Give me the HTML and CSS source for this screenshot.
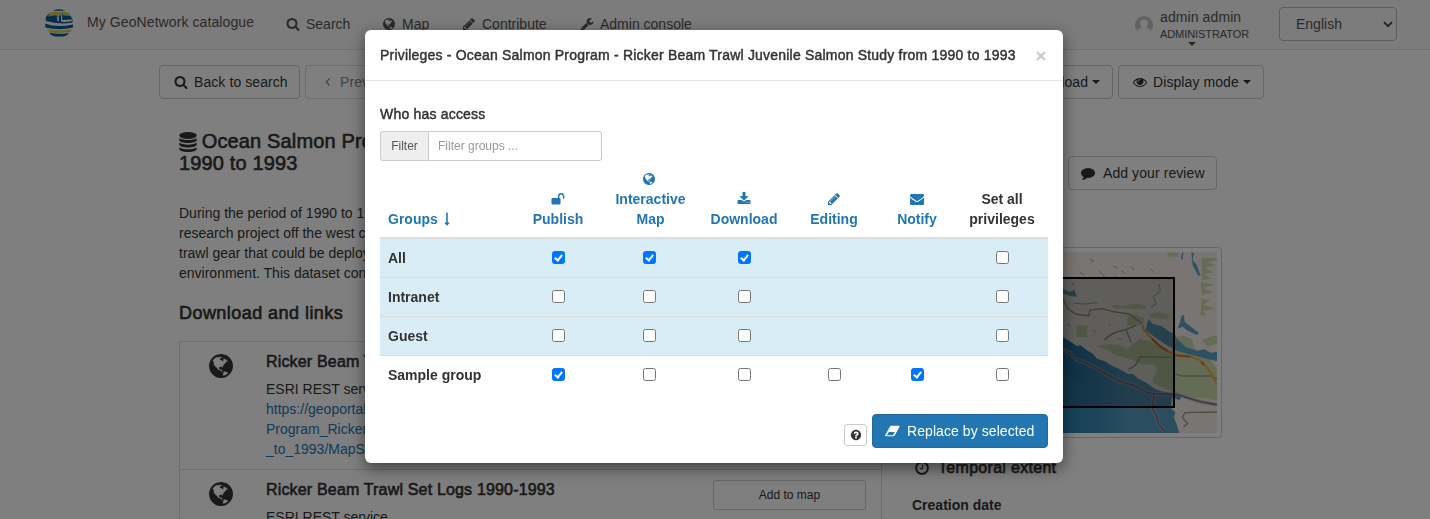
FILE: index.html
```html
<!DOCTYPE html>
<html lang="en">
<head>
<meta charset="utf-8">
<title>My GeoNetwork catalogue</title>
<link rel="stylesheet" href="styles.css">
</head>
<body>
<svg class="sprite" aria-hidden="true">
  <symbol id="search" viewBox="0 0 1792 1792"><path d="M1216 832q0-185-131.500-316.500t-316.500-131.500-316.500 131.500-131.500 316.500 131.500 316.500 316.500 131.500 316.500-131.500 131.500-316.500zm512 832q0 52-38 90t-90 38q-54 0-90-38l-343-342q-179 124-399 124-143 0-273.500-55.500t-225-150-150-225-55.500-273.500 55.500-273.500 150-225 225-150 273.500-55.500 273.500 55.500 225 150 150 225 55.500 273.500q0 220-124 399l343 343q37 37 37 90z"/></symbol>
  <symbol id="globe" viewBox="0 0 1792 1792"><path d="M896 128q209 0 385.500 103t279.500 279.500 103 385.500-103 385.500-279.500 279.500-385.500 103-385.500-103-279.500-279.500-103-385.500 103-385.500 279.500-279.500 385.500-103zm274 521q-2 1-9.500 9.500t-13.500 9.500q2 0 4.500-5t5-11 3.500-7q6-7 22-15 14-6 52-12 34-8 51 11-2-2 9.500-13t14.500-12q3-2 15-4.500t15-7.500l2-22q-12 1-17.500-7t-6.500-21q0 2-6 8 0-7-4.500-8t-11.500 1-9 1q-10-3-15-7.500t-8-16.500-4-15q-2-5-9.500-11t-9.500-10q-1-2-2.500-5.500t-3-6.500-4-5.500-5.500-2.500-7 5-7.500 10-4.500 5q-3-2-6-1.500t-4.500 1-4.500 3-5 3.500q-3 2-8.500 3t-8.500 2q15-5-1-11-10-4-16-3 9-4 7.500-12t-8.500-14h5q-1-4-8.500-8.500t-17.500-8.500-13-6q-8-5-34-9.500t-33-.5q-5 6-4.500 10.500t4 14 3.500 12.500q1 6-5.500 13t-6.500 12q0 7 14 15.500t10 21.500q-3 8-16 16t-16 12q-5 8-1.500 18.500t10.500 16.500q2 2 1.500 4t-3.500 4.500-5.500 4-6.500 3.500l-3 2q-11 5-20.500-6t-13.500-26q-7-25-16-30-23-8-29 1-5-13-41-26-25-9-58-4 6-1 0-15-7-15-19-12 3-6 4-17.500t1-13.500q3-13 12-23 1-1 7-8.500t9.500-13.500.5-6q35 4 50-11 5-5 11.500-17t10.500-17q9-6 14-5.500t14.500 5.500 14.500 5q14 1 15.500-11t-7.500-20q12 1 3-17-4-7-8-9-12-4-27 5-8 4 2 8-1-1-9.500 10.500t-16.500 17.500-16-5q-1-1-5.500-13.500t-9.500-13.500q-8 0-16 15 3-8-11-15t-24-8q19-12-8-27-7-4-20.500-5t-19.500 4q-5 7-5.500 11.500t5 8 10.500 5.500 11.500 4 8.500 3q14 10 8 14-2 1-8.500 3.500t-11.500 4.500-6 4q-3 4 0 14t-2 14q-5-5-9-17.500t-7-16.500q7 9-25 6l-10-1q-4 0-16 2t-20.500 1-13.500-8q-4-8 0-20 1-4 4-2-4-3-11-9.500t-10-8.500q-46 15-94 41 6 1 12-1 5-2 13-6.500t10-5.500q34-14 42-7l5-5q14 16 20 25-7-4-30-1-20 6-22 12 7 12 5 18-4-3-11.500-10t-14.500-11-15-5q-16 0-22 1-146 80-235 222 7 7 12 8 4 1 5 9t2.500 11 11.500-3q9 8 3 19 1-1 44 27 19 17 21 21 3 11-10 18-1-2-9-9t-9-4q-3 5 .5 18.500t10.500 12.500q-7 0-9.500 16t-2.500 35.500-1 23.500l2 1q-3 12 5.500 34.500t21.500 19.500q-13 3 20 43 6 8 8 9 3 2 12 7.500t15 10 10 10.500q4 5 10 22.500t14 23.500q-2 6 9.500 20t10.500 23q-1 0-2.500 1t-2.500 1q3 7 15.500 14t15.500 13q1 3 2 10t3 11 8 2q2-20-24-62-15-25-17-29-3-5-5.500-15.500t-4.500-14.500q2 0 6 1.500t8.500 3.500 7.500 4 2 3q-3 7 2 17.500t12 18.500 17 19 12 13q6 6 14 19.500t0 13.500q9 0 20 10.500t17 19.500q5 8 8 26t5 24q2 7 8.500 13.500t12.500 9.500l16 8 13 7q5 2 18.500 10.500t21.500 11.500q10 4 16 4t14.500-2.500 13.500-3.500q15-2 29 15t21 21q36 19 55 11-2 1 .5 7.500t8 15.500 9 14.500 5.500 8.500q5 6 18 15t18 15q6-4 7-9-3 8 7 20t18 10q14-3 14-32-31 15-49-18 0-1-2.500-5.500t-4-8.500-2.500-8.500 0-7.500 5-3q9 0 10-3.500t-2-12.500-4-13q-1-8-11-20t-12-15q-5 9-16 8t-16-9q0 1-1.500 5.500t-1.500 6.500q-13 0-15-1 1-3 2.500-17.500t3.500-22.500q1-4 5.500-12t7.500-14.500 4-12.500-4.500-9.500-17.500-2.500q-19 1-26 20-1 3-3 10.500t-5 11.500-9 7q-7 3-24 2t-24-5q-13-8-22.500-29t-9.500-37q0-10 2.500-26.500t3-25-5.500-24.500q3-2 9-9.500t10-10.500q2-1 4.500-1.500t4.500 0 4-1.500 3-6q-1-1-4-3-3-3-4-3 7 3 28.500-1.500t27.500 1.500q15 11 22-2 0-1-2.500-9.500t-.5-13.500q5 27 29 9 3 3 15.500 5t17.500 5q3 2 7 5.500t5.500 4.500 5-.5 8.500-6.500q10 14 12 24 11 40 19 44 7 3 11 2t4.500-9.500 0-14-1.500-12.500l-1-8v-18l-1-8q-15-3-18.500-12t1.500-18.500 15-18.500q1-1 8-3.500t15.500-6.500 12.500-8q21-19 15-35 7 0 11-9-1 0-5-3t-7.500-5-4.500-2q9-5 2-16 5-3 7.500-11t7.500-10q9 12 21 2 7-8 1-16 5-7 20.500-10.500t18.500-9.500q7 2 8-2t1-12 3-12q4-5 15-9t13-5l17-11q3-4 0-4 18 2 31-11 10-11-6-20 3-6-3-9.500t-15-5.500q3-1 11.500-.5t10.500-1.500q15-10-7-16-17-5-43 12zm-163 877q206-36 351-189-3-3-12.500-4.500t-12.500-3.500q-18-7-24-8 1-7-2.500-13t-8-9-12.500-8-11-7q-2-2-7-6t-7-5.500-7.500-4.500-8.500-2-10 1l-3 1q-3 1-5.500 2.500t-5.500 3-4 3 0 2.500q-21-17-36-22-5-1-11-5.500t-10.500-7-10-1.500-11.500 7q-5 5-6 15t-2 13q-7-5 0-17.500t2-18.500q-3-6-10.500-4.500t-12 4.500-11.500 8.500-9 6.500-8.500 5.500-8.500 7.500q-3 4-6 12t-5 11q-2-4-11.500-6.500t-9.500-5.500q2 10 4 35t5 38q7 31-12 48-27 25-29 40-4 22 12 26 0 7-8 20.500t-7 21.500q0 6 2 16z"/></symbol>
  <symbol id="pencil" viewBox="0 0 1792 1792"><path d="M491 1536l91-91-235-235-91 91v107h128v128h107zm523-928q0-22-22-22-10 0-17 7l-542 542q-7 7-7 17 0 22 22 22 10 0 17-7l542-542q7-7 7-17zm-54-192l416 416-832 832h-416v-416zm683 96q0 53-37 90l-166 166-416-416 166-165q36-38 90-38 53 0 91 38l235 234q37 39 37 91z"/></symbol>
  <symbol id="wrench" viewBox="0 0 1792 1792"><path d="M448 1472q0-26-19-45t-45-19-45 19-19 45 19 45 45 19 45-19 19-45zm644-420l-682 682q-37 37-90 37-52 0-91-37l-106-108q-38-36-38-90 0-53 38-91l681-681q39 98 114.500 173.500t173.500 114.500zm634-435q0 39-23 106-47 134-164.500 217.500t-258.500 83.500q-185 0-316.500-131.500t-131.500-316.500 131.500-316.500 316.500-131.500q58 0 121.500 16.500t107.500 46.500q16 11 16 28t-16 28l-293 169v224l193 107q5-3 79-48.500t135.500-81 70.500-35.500q15 0 23.500 10t8.500 25z"/></symbol>
  <symbol id="eye" viewBox="0 0 1792 1792"><path d="M1664 960q-152-236-381-353 61 104 61 225 0 185-131.500 316.500t-316.500 131.500-316.500-131.500-131.500-316.500q0-121 61-225-229 117-381 353 133 205 333.500 326.500t434.500 121.500 434.500-121.500 333.500-326.500zm-720-384q0-20-14-34t-34-14q-125 0-214.500 89.500t-89.500 214.500q0 20 14 34t34 14 34-14 14-34q0-86 61-147t147-61q20 0 34-14t14-34zm848 384q0 34-20 69-140 230-376.500 368.500t-499.500 138.500-499.500-139-376.500-368q-20-35-20-69t20-69q140-229 376.500-368t499.500-139 499.500 139 376.500 368q20 35 20 69z"/></symbol>
  <symbol id="comment" viewBox="0 0 1792 1792"><path d="M1792 896q0 174-120 321.500t-326 233-450 85.500q-70 0-145-8-198 175-460 242-49 14-114 22-17 2-30.500-9t-17.500-29v-1q-3-4-.5-12t2-10 4.500-9.500l6-9 7-8.500 8-9q7-8 31-34.500t34.500-38 31-39.500 32.500-51 27-59 26-76q-157-89-247.500-220t-90.500-281q0-130 71-248.500t191-204.500 286-136.500 348-50.500q244 0 450 85.500t326 233 120 321.500z"/></symbol>
  <symbol id="envelope" viewBox="0 0 1792 1792"><path d="M1792 710v794q0 66-47 113t-113 47h-1472q-66 0-113-47t-47-113v-794q44 49 101 87 362 246 497 345 57 42 92.500 65.500t94.500 48 110 24.500h2q51 0 110-24.500t94.500-48 92.500-65.500q170-123 498-345 57-39 100-87zm0-294q0 79-49 151t-122 123q-376 261-468 325-10 7-42.500 31t-54 38.500-52 32.500-57.500 27-50 9h-2q-23 0-50-9t-57.500-27-52-32.500-54-38.500-42.500-31q-91-64-262-182.500t-205-142.500q-62-42-117-115.500t-55-136.500q0-78 41.500-130t118.500-52h1472q65 0 112.500 47t47.500 113z"/></symbol>
  <symbol id="download" viewBox="0 0 1792 1792"><path d="M1344 1344q0-26-19-45t-45-19-45 19-19 45 19 45 45 19 45-19 19-45zm256 0q0-26-19-45t-45-19-45 19-19 45 19 45 45 19 45-19 19-45zm128-224v320q0 40-28 68t-68 28h-1472q-40 0-68-28t-28-68v-320q0-40 28-68t68-28h465l135 136q58 56 136 56t136-56l136-136h464q40 0 68 28t28 68zm-325-569q17 41-14 70l-448 448q-18 19-45 19t-45-19l-448-448q-31-29-14-70 17-39 59-39h256v-448q0-26 19-45t45-19h256q26 0 45 19t19 45v448h256q42 0 59 39z"/></symbol>
  <symbol id="clock" viewBox="0 0 1792 1792"><path d="M1024 544v448q0 14-9 23t-23 9h-320q-14 0-23-9t-9-23v-64q0-14 9-23t23-9h224v-352q0-14 9-23t23-9h64q14 0 23 9t9 23zm416 352q0-148-73-273t-198-198-273-73-273 73-198 198-73 273 73 273 198 198 273 73 273-73 198-198 73-273zm224 0q0 209-103 385.500t-279.500 279.500-385.500 103-385.500-103-279.500-279.500-103-385.500 103-385.500 279.500-279.500 385.500-103 385.500 103 279.500 279.500 103 385.500z"/></symbol>
  <symbol id="question" viewBox="0 0 1792 1792"><path d="M1024 1376v-192q0-14-9-23t-23-9h-192q-14 0-23 9t-9 23v192q0 14 9 23t23 9h192q14 0 23-9t9-23zm256-672q0-88-55.500-163t-138.500-116-170-41q-243 0-371 213-15 24 8 42l132 100q7 6 19 6 16 0 25-12 53-68 86-92 34-24 86-24 48 0 85.500 26t37.500 59q0 38-20 61t-68 45q-63 28-115.500 86.500t-52.500 125.500v36q0 14 9 23t23 9h192q14 0 23-9t9-23q0-19 21.500-49.500t54.500-49.500q32-18 49-28.500t46-35 44.500-48 28-60.500 12.500-81zm384 192q0 209-103 385.500t-279.500 279.500-385.500 103-385.500-103-279.500-279.500-103-385.500 103-385.500 279.500-279.500 385.500-103 385.500 103 279.500 279.500 103 385.500z"/></symbol>
  <symbol id="database" viewBox="0 0 18 20"><ellipse cx="9" cy="3.500" rx="8.700" ry="3.400"/><path d="M.3 6c3 2.800 14.400 2.800 17.400 0v2c0 4-17.400 4-17.400 0zM.3 10.600c3 2.800 14.400 2.800 17.400 0v2c0 4-17.400 4-17.400 0zM.3 15.200c3 2.800 14.400 2.800 17.400 0v1.900c0 4-17.400 4-17.400 0z"/></symbol>
  <symbol id="unlock" viewBox="0 0 14 14"><rect x=".5" y="6" width="9" height="6.500" rx=".7"/><path d="M7.700 6.300V4.200a2.400 2.400 0 0 1 4.900 0v2" fill="none" stroke="currentColor" stroke-width="1.400" stroke-linecap="round"/></symbol>
  <symbol id="arrow-down" viewBox="0 0 6 14"><path d="M2.200.5h1.600v10H6L3 13.800 0 10.500h2.200z"/></symbol>
  <symbol id="eraser" viewBox="0 0 15 12"><path fill-rule="evenodd" d="M6.200.7h7.600q1.200 0 .7 1L9.700 10.500q-.5.800-1.300.8H.9q-1.200 0-.7-1L5 1.500Q5.400.7 6.200.7zM3.800 7L2 10.200h6L9.800 7z"/></symbol>
  <symbol id="times" viewBox="0 0 10 10"><path d="M1 1l8 8M9 1L1 9" stroke="currentColor" stroke-width="2.400"/></symbol>
  <symbol id="chevron-left" viewBox="0 0 6 10"><path d="M4.600 1.500L1.200 5l3.400 3.500" fill="none" stroke="currentColor" stroke-width="1.200"/></symbol>
</svg>

<header class="navbar">
  <svg class="logo" viewBox="0 0 28 28">
    <path fill="#0d5a96" d="M9 1.500Q14-1 19 1.500L20 2Q14 1.500 8.500 2zM5 4Q14 2.500 23 4l3 3.500Q28 10 27.500 13.500 14 16 1 12 0 8.500 2 6.500z"/>
    <path fill="#d9cf3a" d="M5 3.800Q14 2 23 3.800l3 3.400-8-1V5h-2v1.500H9L3 7.500z"/>
    <path fill="#f4f4f4" d="M12.500 5.500h1.300v7q-1.200 0-1.800-1.500zM16 5.500h1.200V11l10-.5v1.500q-8 1.500-11.200.5z"/>
    <path fill="#0d5a96" d="M0 14.500Q12 19 28 15.500v3Q14 22 .5 18.500z"/>
    <path fill="#d9cf3a" d="M2 20.300q12 2.500 25 .2l-1.500 2.600Q14 24.500 5 23.200z"/>
    <path fill="#0d5a96" d="M4.500 23.800Q14 25.800 24 24q-1.500 3-5 3.400H10Q6 27 4.500 23.800z"/>
  </svg>
  <span class="brand">My GeoNetwork catalogue</span>
  <nav class="menu">
    <a class="m-search"><svg class="fa"><use href="#search"/></svg><span>Search</span></a>
    <a class="m-map"><svg class="fa"><use href="#globe"/></svg><span>Map</span></a>
    <a class="m-contribute"><svg class="fa"><use href="#pencil"/></svg><span>Contribute</span></a>
    <a class="m-admin"><svg class="fa"><use href="#wrench"/></svg><span>Admin console</span></a>
  </nav>
  <div class="user">
    <svg class="avatar" viewBox="0 0 18 18"><circle cx="9" cy="9" r="9" fill="#c5c5c5"/><path fill="#f8f8f8" d="M9 3.500c5 0 4.500 7 2 8.300 3 .5 4 1.500 4.500 3.700A9 9 0 0 1 2.500 15.500c.5-2.200 1.500-3.200 4.500-3.700C4.500 10.500 4 3.500 9 3.500z"/></svg>
    <div class="who"><span class="name">admin admin</span><span class="role">ADMINISTRATOR</span><i class="caret"></i></div>
  </div>
  <div class="lang"><span>English</span><svg class="chev" viewBox="0 0 10 7"><path d="M1 1.200l4 4 4-4" fill="none" stroke="#444" stroke-width="1.900"/></svg></div>
</header>

<div class="toolbar">
  <div class="btn b-back"><svg class="fa"><use href="#search"/></svg><span>Back to search</span></div>
  <div class="btn b-prev"><svg class="left"><use href="#chevron-left"/></svg><span>Previous</span></div>
  <div class="btn b-down"><svg class="fa"><use href="#download"/></svg><span>Download</span><i class="caret"></i></div>
  <div class="btn b-mode"><svg class="fa"><use href="#eye"/></svg><span>Display mode</span><i class="caret"></i></div>
</div>

<main class="record">
  <section class="main">
    <h1><svg class="db"><use href="#database"/></svg> <span>Ocean Salmon Program - Ricker Beam Trawl</span><br>1990 to 1993</h1>
    <p class="abstract">During the period of 1990 to 1993<br>research project off the west coast<br>trawl gear that could be deployed<br>environment. This dataset contains</p>
    <h2>Download and links</h2>
    <div class="links">
      <div class="link">
        <svg class="big"><use href="#globe"/></svg>
        <div class="info"><h3>Ricker Beam Trawl</h3><p>ESRI REST service</p><a>https://geoportal<br>Program_Ricker<br>_to_1993/MapServer</a></div>
      </div>
      <div class="link">
        <svg class="big"><use href="#globe"/></svg>
        <div class="info"><h3>Ricker Beam Trawl Set Logs 1990-1993</h3><p>ESRI REST service</p></div>
        <div class="add">Add to map</div>
      </div>
    </div>
  </section>
  <aside class="side">
    <div class="btn review"><svg class="fa"><use href="#comment"/></svg><span>Add your review</span></div>
    <div class="map">
      <svg viewBox="-402 36 903 543" preserveAspectRatio="none">
        <defs><linearGradient id="sea" x1="0" x2="1"><stop offset=".5" stop-color="#1572ab"/><stop offset=".8" stop-color="#559cc0"/></linearGradient></defs>
        <rect x="-402" y="36" width="903" height="543" fill="#f2ebe4"/>
        <path fill="url(#sea)" d="M-402 250L39 292l20 12 22 14 10-2 24 18 12 6 14 16 24 8 18 12 26 12 26 14 14 0 16 14 24 12 22 16 18 8 60 14 8 0-8 14-8 8-2 18 6 24 10 67H-402z"/>
        <path fill="#f2ebe4" d="M366 472l30 12 50 8 55 10v77H388l-8-26-8-20 4-16-14-14z"/>
        <path fill="#3c8fba" d="M-402 340L39 400l30 22 32 14-4 22 26 10 16 18-6 22 14 18-8 24 20 29H-402z" opacity=".45"/>
        <g fill="#c8d8ac">
          <path d="M80 256h32v36H80zM232 230l20-8 30 12-2 18-22 6-26-2zM136 318l40-6 32 4 20 6-8 12 30-22 20-14 30 4 40 26 32 4 60 14 48 12 20 28 8 96-86-12-44-10-20-10-48-20-2-14 14-30-14-14-30 4-40-20-44-12-22-14z"/>
          <path d="M186 196l34 2 36-8 34 8-4 10-46-2-50-2zM296 222l32-6 30 10-4 12-50-4zM376 292l24-6 28 14 6 30-30-14zM454 54h47v6l-30 6 26 10-34 8 28 14-30 4 22 14-26 4zM452 126l40 8-32 10 30 14-34 6zM454 176l26 4-20 14 36 12-38 8 12 12-18 0zM350 38h34v12h-28zM456 300l45-16v28l-30 8z"/>
        </g>
        <path fill="#5fa0c2" d="M296 238l12 14 26 6 22 16 18 8 10 18 22 6 34 26 24-4 18 10 19-2v28l-50-12-38-10-34-10-34-20-30-20-28-22 4-18zM39 146l18 10 16-6 8 20-20-2-22-8zM394 228l8-4 2 22 24 18 18 14-6 8-30-16-12-10-16 6 8-18zM424 38h8l-4 22 12 14 12 34-8-2-16-30zM396 38h4l-2 20h-5z"/>
        <path fill="#c8d8ac" d="M376 292l24 2 28 14 6 22-26-8z"/>
        <path d="M118 58l12 4-8 8M88 96l14 8M146 92l18 18M190 78l12 6M64 128l10 8M214 92l12 8M326 132l6 20-22 18 8 22-16 10M196 108l10 12M244 80l8 10M70 190l38 2 36-4M128 270l10 8M176 252l6 6M302 86l10 12M50 252l12 6M204 296l12 2" fill="none" stroke="#83b0c8" stroke-width="3"/>
        <g fill="none" stroke="#a0978e" stroke-width="4"><path d="M39 176l14 30 24 16 40 6 2-18 38-4 28 8 52 8 38 28M164 300q16-22 60-30l34-14M228 270l16 38M236 388l20-12 16-26 92 2M401 560l12-10-16-18 8-14 96-2M376 402l20 6h86l19 8"/></g>
        <g fill="none"><path d="M278 254l4 16 24 26 24 24 26 16 20 8 46 6 30 12 20 22 16 24 13 26" stroke="#f5a93a" stroke-width="6"/><path d="M306 296l26 24 20 12m24 14l46 4m30 16l12 10" stroke="#dd6c35" stroke-width="6"/></g>
        <g fill="none" stroke="#baa9c5" stroke-opacity=".5" stroke-width="13"><path d="M-402 220L39 328l20 10 16 18 34 14 32 16 34 20 40 20 36 10 40 22 26 4 60 0 38 12 40 12 46 8M312 464l-4 44 12 20 6 24 22 27"/></g>
        <g fill="none" stroke="#77727f" stroke-width="5"><path d="M-402 220L39 328l20 10 16 18 34 14 32 16 34 20 40 20 36 10 40 22 26 4 60 0 38 12 40 12 46 8M312 464l-4 44 12 20 6 24 22 27"/></g>
        <rect x="-300" y="114" width="672" height="387" fill="#000" fill-opacity=".2" stroke="#000" stroke-width="6"/>
      </svg>
    </div>
    <h2><svg class="clock"><use href="#clock"/></svg><span>Temporal extent</span></h2>
    <h4>Creation date</h4>
  </aside>
</main>

<div class="backdrop"></div>
<div class="modal">
  <div class="modal-head"><h5>Privileges - Ocean Salmon Program - Ricker Beam Trawl Juvenile Salmon Study from 1990 to 1993</h5><svg class="close"><use href="#times"/></svg></div>
  <div class="modal-body">
    <div class="access">Who has access</div>
    <div class="filter"><span class="addon">Filter</span><input type="text" placeholder="Filter groups ..."></div>
    <table>
      <colgroup><col class="c0"><col class="c1"><col class="c2"><col class="c3"><col class="c4"><col class="c5"><col class="c6"></colgroup>
      <thead><tr>
        <th class="group"><span>Groups</span> <svg class="sort"><use href="#arrow-down"/></svg></th>
        <th><svg class="fa"><use href="#unlock"/></svg><br>Publish</th>
        <th class="wide"><svg class="fa globe"><use href="#globe"/></svg><br>Interactive<br>Map</th>
        <th><svg class="fa"><use href="#download"/></svg><br>Download</th>
        <th><svg class="fa"><use href="#pencil"/></svg><br>Editing</th>
        <th><svg class="fa"><use href="#envelope"/></svg><br>Notify</th>
        <th class="dark">Set all<br>privileges</th>
      </tr></thead>
      <tbody>
        <tr class="info-row"><td class="group">All</td><td><i class="cb on"></i></td><td><i class="cb on"></i></td><td><i class="cb on"></i></td><td></td><td></td><td><i class="cb"></i></td></tr>
        <tr class="info-row"><td class="group">Intranet</td><td><i class="cb"></i></td><td><i class="cb"></i></td><td><i class="cb"></i></td><td></td><td></td><td><i class="cb"></i></td></tr>
        <tr class="info-row"><td class="group">Guest</td><td><i class="cb"></i></td><td><i class="cb"></i></td><td><i class="cb"></i></td><td></td><td></td><td><i class="cb"></i></td></tr>
        <tr><td class="group">Sample group</td><td><i class="cb on"></i></td><td><i class="cb"></i></td><td><i class="cb"></i></td><td><i class="cb"></i></td><td><i class="cb on"></i></td><td><i class="cb"></i></td></tr>
      </tbody>
    </table>
    <div class="actions"><div class="help"><svg><use href="#question"/></svg></div><div class="primary"><svg><use href="#eraser"/></svg><span>Replace by selected</span></div></div>
  </div>
</div>
</body>
</html>
```
FILE: styles.css
```css
* { box-sizing: border-box; }
html, body { height: 100%; }
body { display: flex; flex-direction: column; margin: 0; overflow: hidden; background: #fff; color: #333; font: 14px/20px "Liberation Sans", Arial, sans-serif; }
svg { fill: currentColor; display: block; flex: none; }
h1, h2, h3, h4, h5, p { margin: 0; font-weight: normal; }
h1, h2, h3 { -webkit-text-stroke: .6px currentColor; }
h5, .access { -webkit-text-stroke: .45px currentColor; letter-spacing: .2px; }
span { white-space: nowrap; }
.sprite { position: absolute; width: 0; height: 0; }
.fa { width: 14px; height: 14px; }
.caret { width: 0; height: 0; border: 4px solid transparent; border-top-color: currentColor; border-bottom: 0; }

.navbar { display: flex; flex: none; align-items: flex-start; height: 50px; background: #f8f8f8; border-bottom: 1px solid #e0e0e0; color: #555; padding: 7px 33px 0 45px; }
.logo { width: 28px; height: 28px; margin: 2px 14px 0 0; }
.brand { width: 199px; margin-top: 5px; letter-spacing: .09px; }
.menu { display: flex; margin-top: 7px; }
.menu a { display: flex; align-items: center; gap: 6px; }
.m-search { width: 96px; }
.m-map { width: 80px; }
.m-contribute { width: 118px; }
.user { display: flex; margin-left: auto; width: 144px; }
.avatar { width: 18px; height: 18px; margin: 9px 7px 0 0; }
.who { display: flex; flex-direction: column; }
.name { line-height: 20px; letter-spacing: .1px; }
.role { font-size: 11px; line-height: 14px; letter-spacing: -.08px; }
.who .caret { margin: 1px 0 0 28px; }
.lang { display: flex; align-items: center; justify-content: space-between; width: 118px; height: 34px; border: 1px solid #bbb; border-radius: 4px; padding: 0 3px 0 16px; }
.chev { width: 10px; height: 7px; }

.toolbar { display: flex; flex: none; width: 1105px; margin: 15px 0 0 159px; }
.btn { display: flex; align-items: center; height: 34px; border: 1px solid #ccc; border-radius: 4px; padding: 0 14px; gap: 6px; letter-spacing: .08px; }
.b-back { width: 141px; margin-right: 5px; }
.b-prev { width: 110px; color: #888; border-color: #ddd; padding-left: 19px; gap: 9px; }
.left { width: 6px; height: 10px; }
.b-down { width: 123px; margin-left: auto; margin-right: 5px; justify-content: flex-end; padding-right: 12px; }
.b-mode { width: 146px; }
.btn .caret { margin-left: -2px; }

.record { display: flex; flex: 1; min-height: 0; overflow: hidden; padding: 31px 208px 0 179px; justify-content: space-between; }
.main { width: 703px; }
h1 { font-size: 20px; line-height: 22px; letter-spacing: .15px; }
.db { display: inline-block; width: 18px; height: 20px; margin-right: -1px; vertical-align: -4px; }
.abstract { margin-top: 29px; }
h2 { font-size: 18px; line-height: 20px; }
.main h2 { margin-top: 20px; letter-spacing: .45px; }
.links { margin-top: 18px; border: 1px solid #ddd; }
.link { display: flex; height: 128px; border-bottom: 1px solid #ddd; padding: 10px 15px 0 27px; }
.big { width: 28px; height: 28px; }
.info { width: 447px; margin-left: 31px; }
h3 { font-size: 16px; line-height: 20px; letter-spacing: .17px; }
.info p { margin-top: 7px; }
.info a { color: #2277b3; }
.add { width: 153px; height: 30px; border: 1px solid #ccc; border-radius: 3px; text-align: center; font-size: 12px; line-height: 28px; }
.side { width: 311px; margin-top: 26px; }
.review { width: 149px; margin-left: 157px; padding-left: 12px; gap: 8px; }
.map { margin-top: 57px; height: 191px; padding: 4px; border: 1px solid #ccc; border-radius: 4px; }
.map svg { width: 301px; height: 181px; }
.side h2 { display: flex; align-items: center; margin-top: 20px; padding-left: 3px; gap: 8px; font-size: 16px; letter-spacing: .3px; }
.clock { width: 16px; height: 16px; }
.side h4 { margin-top: 17px; padding-left: 1px; font-weight: bold; }

.backdrop { position: fixed; inset: 0; background: rgba(0, 0, 0, .5); }
.modal { position: absolute; left: 365px; top: 30px; width: 698px; height: 433px; background: #fff; border-radius: 6px; box-shadow: 0 5px 15px rgba(0, 0, 0, .5); }
.modal-head { display: flex; justify-content: space-between; height: 51px; border-bottom: 1px solid #e5e5e5; padding: 15px 17px 0 15px; }
.modal-head h5 { font-size: 14px; line-height: 20px; white-space: nowrap; }
.close { width: 10px; height: 10px; margin-top: 6px; color: #ccc; }
.modal-body { padding: 23px 15px 15px; }
.access { line-height: 20px; }
.filter { display: flex; width: 222px; height: 30px; margin-top: 7px; }
.addon { width: 48px; border: 1px solid #ccc; border-right: 0; border-radius: 3px 0 0 3px; background: #eee; color: #555; text-align: center; font-size: 12px; line-height: 28px; }
.filter input { width: 174px; border: 1px solid #ccc; border-radius: 0 3px 3px 0; padding: 0 9px; font: 12px "Liberation Sans", Arial, sans-serif; }
.filter input::placeholder { color: #999; }
table { width: 668px; table-layout: fixed; border-collapse: separate; border-spacing: 0; }
.c0 { width: 135px; } .c1 { width: 86px; } .c2 { width: 97px; } .c3 { width: 92px; } .c4 { width: 88px; } .c5 { width: 78px; } .c6 { width: 92px; }
th { height: 78px; padding: 0 0 8px; vertical-align: bottom; color: #2277b3; border-bottom: 2px solid #ddd; font-weight: bold; white-space: nowrap; }
th.wide { padding-left: 2px; }
th .fa { display: inline-block; vertical-align: -2px; }
th .globe { margin-left: -4px; }
.group { text-align: left; padding-left: 8px; font-weight: bold; }
.sort { display: inline-block; width: 6px; height: 14px; margin-left: 2px; vertical-align: -2px; }
th.dark { color: #333; }
td { height: 39px; padding: 0 0 1px; text-align: center; border-bottom: 1px solid #ddd; }
td.group { text-align: left; padding-left: 8px; }
.info-row td { background: #d9edf7; }
tr:last-child td { border-bottom: 0; padding-bottom: 2px; }
.cb { display: block; width: 13px; height: 13px; margin: 0 auto; border: 1px solid #767676; border-radius: 2.5px; background: #fff; }
.cb.on { border-color: #0075ff; background: #0075ff; }
.cb.on::after { content: ""; display: block; width: 3px; height: 6px; margin: .5px 0 0 3px; border: solid #fff; border-width: 0 2px 2px 0; transform: rotate(38deg); }
.actions { display: flex; justify-content: flex-end; align-items: flex-end; margin-top: 19px; gap: 5px; }
.help { display: flex; align-items: center; justify-content: center; width: 23px; height: 22px; margin-bottom: 2px; border: 1px solid #ccc; border-radius: 3px; }
.help svg { width: 12px; height: 12px; }
.primary { display: flex; align-items: center; width: 176px; height: 34px; padding-left: 12px; gap: 7px; border: 1px solid #1e6a9f; border-radius: 4px; background: #2277b3; color: #fff; letter-spacing: .07px; }
.primary svg { width: 15px; height: 12px; }
```
